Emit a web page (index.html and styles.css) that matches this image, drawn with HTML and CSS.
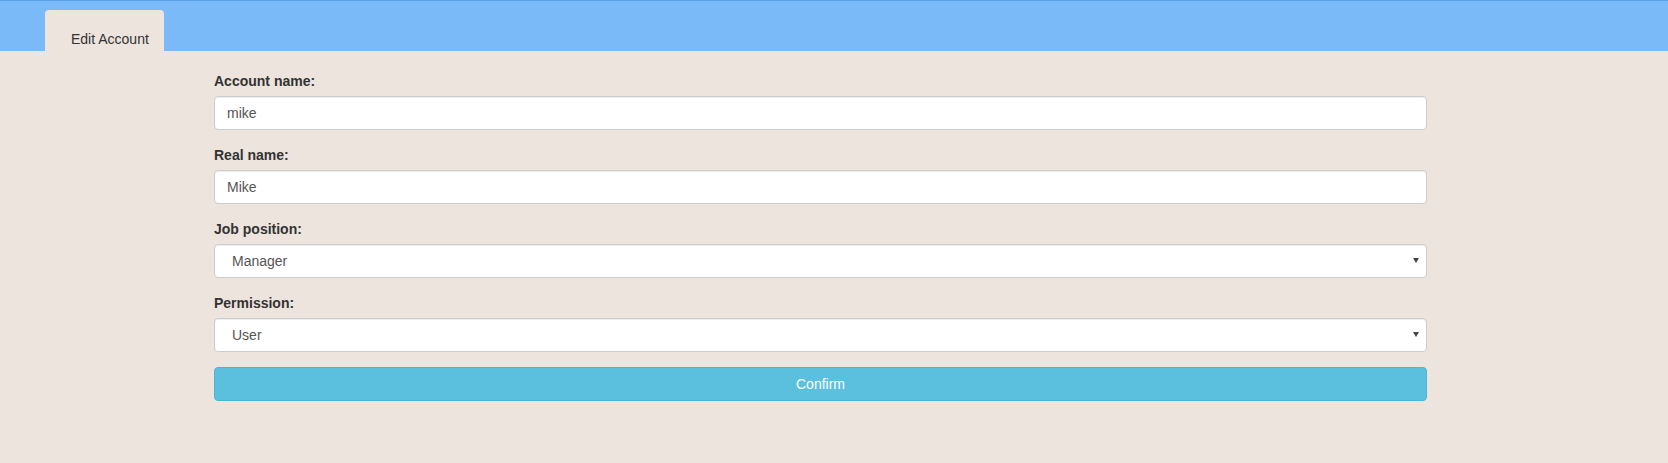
FILE: index.html
```html
<!DOCTYPE html>
<html>
<head>
<meta charset="utf-8">
<title>Edit Account</title>
<link rel="stylesheet" href="styles.css">
</head>
<body>
<header class="topbar">
  <nav class="tabs">
    <div class="tab active">Edit Account</div>
  </nav>
</header>
<main class="content">
  <form class="account-form">
    <div class="form-group">
      <label class="label" for="acc">Account name:</label>
      <input class="control" id="acc" type="text" value="mike">
    </div>
    <div class="form-group">
      <label class="label" for="real">Real name:</label>
      <input class="control" id="real" type="text" value="Mike">
    </div>
    <div class="form-group">
      <label class="label" for="job">Job position:</label>
      <div class="select-wrap">
        <select class="control select" id="job">
          <option>Manager</option>
        </select>
      </div>
    </div>
    <div class="form-group">
      <label class="label" for="perm">Permission:</label>
      <div class="select-wrap">
        <select class="control select" id="perm">
          <option>User</option>
        </select>
      </div>
    </div>
    <button class="btn-confirm" type="button">Confirm</button>
  </form>
</main>
</body>
</html>
```
FILE: styles.css
```css
html, body {
  margin: 0;
  padding: 0;
}
body {
  background: #ede4de;
  font-family: "Liberation Sans", Arial, Helvetica, sans-serif;
  font-size: 14px;
  line-height: 20px;
  color: #333;
  height: 463px;
  overflow: hidden;
}
.topbar {
  background: #7abaf8;
  border-top: 1px solid #5a9eea;
  height: 50px;
  display: flex;
  align-items: flex-end;
}
.tabs {
  display: flex;
  margin-left: 45px;
}
.tab {
  background: #ede4de;
  border-radius: 4px 4px 0 0;
  width: 119px;
  height: 41px;
  box-sizing: border-box;
  padding: 19px 0 0 26px;
  color: #333;
  font-size: 14px;
  line-height: 20px;
}
.content {
  padding: 20px 0 0 214px;
}
.account-form {
  width: 1213px;
  display: flex;
  flex-direction: column;
}
.form-group {
  display: flex;
  flex-direction: column;
  margin-bottom: 15px;
}
.label {
  font-weight: bold;
  font-size: 14px;
  line-height: 20px;
  margin-bottom: 5px;
  color: #333;
}
.control {
  box-sizing: border-box;
  width: 100%;
  height: 34px;
  padding: 6px 12px;
  font-family: "Liberation Sans", Arial, Helvetica, sans-serif;
  font-size: 14px;
  line-height: 20px;
  color: #555;
  background: #fff;
  border: 1px solid #ccc;
  border-radius: 4px;
  box-shadow: inset 0 1px 1px rgba(0,0,0,0.075);
  outline: none;
  margin: 0;
}
.select-wrap {
  position: relative;
}
.select {
  -webkit-appearance: none;
  appearance: none;
  padding-left: 17px;
}
.select-wrap::after {
  content: "";
  position: absolute;
  right: 8px;
  top: 14px;
  width: 0;
  height: 0;
  border-left: 3px solid transparent;
  border-right: 3px solid transparent;
  border-top: 5px solid #444;
  pointer-events: none;
}
.btn-confirm {
  box-sizing: border-box;
  width: 100%;
  height: 34px;
  background: #5bc0de;
  border: 1px solid #46b8da;
  border-radius: 4px;
  color: #fff;
  font-family: "Liberation Sans", Arial, Helvetica, sans-serif;
  font-size: 14px;
  line-height: 20px;
  padding: 6px 12px;
  cursor: pointer;
}
```
